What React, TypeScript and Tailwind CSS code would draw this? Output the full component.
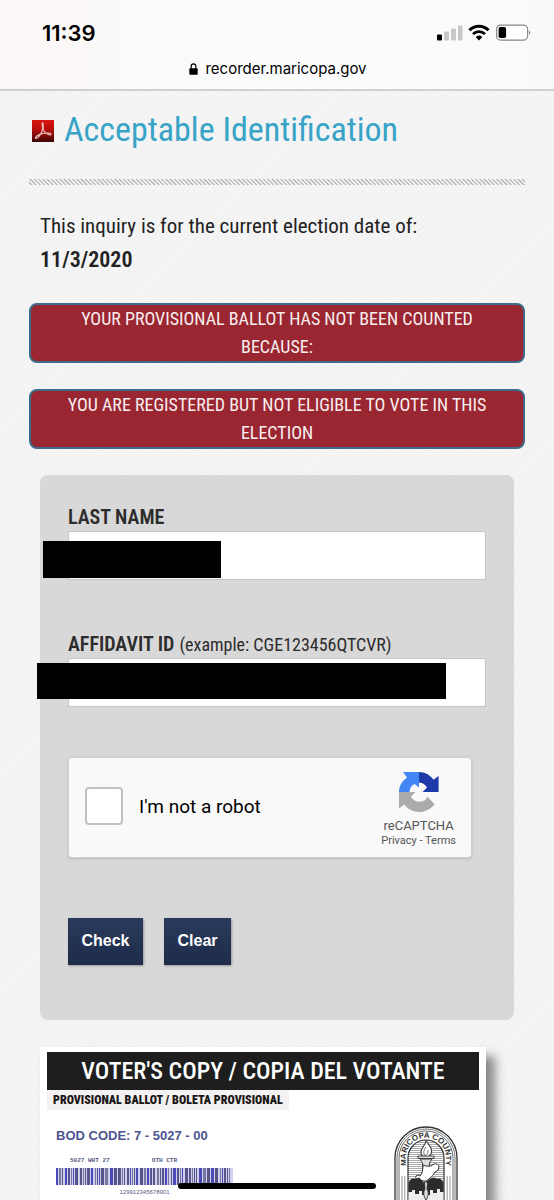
import React from "react";

const condensed = "font-['Roboto_Condensed','Liberation_Sans_Narrow',Roboto,sans-serif]";

const barWidths = [2, 1, 1, 3, 1, 2, 1, 1, 2, 3, 1, 1, 3, 2, 1, 2, 1, 3, 2, 1, 1, 2, 3, 1];

function StatusIcons() {
  return (
    <svg viewBox="0 0 96 18" className="h-[18px] w-24" aria-hidden="true">
      <rect x="2" y="10.5" width="5" height="6" rx="1" fill="#000" />
      <rect x="9" y="7.5" width="5" height="9" rx="1" fill="#c8c8c8" />
      <rect x="16" y="4.5" width="5" height="12" rx="1" fill="#c8c8c8" />
      <rect x="23" y="1.5" width="4.5" height="15" rx="1" fill="#c8c8c8" />
      <path d="M34.5 6.3 C39.5 0.8 48.5 0.8 53.5 6.3" fill="none" stroke="#000" strokeWidth="3" />
      <path d="M38 10.1 C41.2 6.7 46.8 6.7 50 10.1" fill="none" stroke="#000" strokeWidth="2.8" />
      <path d="M40.7 13 Q44 10.2 47.3 13 L44 16.5 Z" fill="#000" />
      <rect x="61.6" y="1.1" width="31" height="15" rx="4" fill="#fff" stroke="#888" strokeWidth="1.2" />
      <rect x="63.6" y="3.1" width="7.5" height="11" rx="1.8" fill="#000" />
      <path d="M94 6.5 Q96.3 8.5 94 10.9 Z" fill="#777" />
    </svg>
  );
}

function Lock() {
  return (
    <svg viewBox="0 0 9 12" className="h-3 w-[9px]" aria-hidden="true">
      <path d="M2.2 6 V3.3 a2.3 2.5 0 0 1 4.6 0 V6" fill="none" stroke="#000" strokeWidth="1.2" />
      <rect x="0.3" y="5.2" width="8.4" height="6.6" rx="1" fill="#000" />
    </svg>
  );
}

function PdfIcon() {
  return (
    <svg viewBox="0 0 22 22" className="size-[22px] shrink-0" aria-hidden="true">
      <defs>
        <linearGradient id="pdf" x1="0" y1="0" x2="0" y2="1">
          <stop offset="0" stopColor="#d9150f" />
          <stop offset="0.45" stopColor="#b50d0b" />
          <stop offset="1" stopColor="#3d0504" />
        </linearGradient>
      </defs>
      <rect width="22" height="22" fill="url(#pdf)" />
      <path
        d="M10.3 2.8 C9.3 4.2 11.5 7 10.2 10.8 C9 14.4 5.6 18.6 3.8 18.4 C2.5 17.6 5.2 15 9.5 13.8 C14 12.6 19.2 12.7 18.9 14.4 C18.3 15.8 14 13.7 12 11 C10.2 8.5 12 4 10.9 2.8 Z"
        fill="none"
        stroke="#e9bdb8"
        strokeWidth="1.2"
        strokeLinejoin="round"
      />
    </svg>
  );
}

function RecaptchaLogo() {
  return (
    <svg viewBox="0 0 40 40" className="size-10" aria-hidden="true">
      <path d="M20 0 C26 0 31 2.8 34.5 7.8 L39.6 4 V20 H23.5 L28 15.6 C26.2 12.4 24 10.8 20 10.5 Z" fill="#1c3aa9" />
      <path d="M20 0 V15.5 L15.6 12 C12.6 13.6 10.8 16 10.5 20 H0 C0 14 3 9 8 5.5 L4 0 Z" fill="#4285f4" />
      <path d="M0 20 H16.5 L12 24.5 C13.8 28 17 29.8 20.5 29.8 C24.5 29.8 27.3 28 28.2 24.6 L35.6 32.2 C32 37 26 40 20 40 C14 40 9 37.4 5.4 32.6 L0 36.6 Z" fill="#ababab" />
    </svg>
  );
}

function Barcode() {
  const bars: React.ReactNode[] = [];
  let x = 0;
  for (let i = 0; x < 174; i++) {
    const w = barWidths[(i * 5 + (i >> 2)) % barWidths.length];
    bars.push(<rect key={i} x={x} y="0" width={w} height="17" fill={i % 4 === 1 ? "#77769f" : i % 3 === 0 ? "#4a49b8" : "#55558a"} />);
    x += w + (i % 5 === 2 ? 2 : 1);
  }
  return (
    <svg viewBox="0 0 177 17" className="h-[17px] w-[177px]" role="img" aria-label="Barcode">
      <rect width="177" height="17" fill="#d0d0ee" />
      {bars}
    </svg>
  );
}

function Seal() {
  return (
    <svg viewBox="0 0 64 76" className="h-[76px] w-16" role="img" aria-label="Maricopa County seal">
      <defs>
        <path id="arch" d="M11.8 47 V32 A20.2 20.2 0 0 1 52.2 32 V47" />
        <pattern id="lines" width="4" height="2" patternUnits="userSpaceOnUse">
          <rect width="4" height="1" fill="#aaa" />
        </pattern>
      </defs>
      <path d="M1 76 V32 A31 31 0 0 1 63 32 V76" fill="#fff" stroke="#333" strokeWidth="1.3" />
      <path d="M3 76 V32 A29 29 0 0 1 61 32 V76" fill="none" stroke="#777" strokeWidth="1" />
      <path d="M5 76 V32 A27 27 0 0 1 59 32 V76" fill="none" stroke="#444" strokeWidth="0.8" />
      <path d="M14 76 V32 A18 18 0 0 1 50 32 V76" fill="url(#lines)" stroke="#333" strokeWidth="1.2" />
      <text fill="#333" className="font-['Liberation_Sans',sans-serif] text-[8px] font-bold">
        <textPath href="#arch" startOffset="50%" textAnchor="middle">MARICOPA COUNTY</textPath>
      </text>
      <path d="M8 50 V76 M10.8 50 V76 M53.2 50 V76 M56 50 V76" stroke="#888" strokeWidth="0.9" />
      <path d="M14.5 57 Q17 51 21 53 Q25 50 30 57 L36 53 Q40 50 43 53 Q47 51 49.5 57 V66 H46 V63 H43 V67 H39 V64 H36 V69 H28 V65 H25 V68 H21 V64 H18 V66 H14.5 Z" fill="#2c2c2c" />
      <path d="M14.6 66 H18 V64 H21 V68 H25 V65 H28 V69 H36 V64 H39 V67 H43 V63 H46 V66 H49.4 V76 H14.6 Z" fill="#eee" />
      <path d="M32 15 C36 20 39 23 37 28 Q35 31 32 31 Q27 31 27 26 C27 22 31 20 32 15 Z" fill="#fff" stroke="#333" strokeWidth="1.1" />
      <path d="M32 21 Q28 26 31 30 Q35 28 34 24" fill="none" stroke="#555" strokeWidth="0.8" />
      <path d="M24 30 H40 V32.5 H24 Z M26 33 H38 L35.5 37 V46 H28.5 V37 Z" fill="#ddd" stroke="#333" strokeWidth="0.9" />
      <path d="M29 39 Q36 42 40 38 Q44 37 45 41 Q45 45 41 46 Q39 50 35 53 Q30 58 25 52 Q21 54 22 50 Q24 48 26 50 Q29 47 29 39 Z" fill="#fff" stroke="#333" strokeWidth="1" />
      <path d="M30.5 56 H33.5 L33 63 Q36 68 32 74 Q28 68 31 63 Z" fill="#ddd" stroke="#333" strokeWidth="0.9" />
    </svg>
  );
}

function Alert({ children }: { children: React.ReactNode }) {
  return (
    <div role="alert" className="rounded-lg border-2 border-[#3d6b88] bg-[#9a2631] px-6 text-center text-[18px] leading-7 text-[#f8eeee]">
      {children}
    </div>
  );
}

function Field({ id, label, hint, mask }: { id: string; label: string; hint?: string; mask: string }) {
  return (
    <div>
      <label htmlFor={id} className="flex h-7 items-baseline gap-[5px] text-[18px] leading-7 text-[#2c2c2c]">
        <span className="text-[20px] font-semibold">{label}</span>
        {hint && <span>{hint}</span>}
      </label>
      <div className="relative">
        <input id={id} type="text" className="block h-[49px] w-full border border-[#c6c6c6] bg-white px-3 shadow-[inset_0_0_1px_#ccc]" />
        <span aria-hidden="true" className={"absolute bg-black " + mask} />
      </div>
    </div>
  );
}

export default function App() {
  return (
    <div className={"flex h-screen flex-col overflow-hidden bg-[#f3f3f3] bg-[repeating-linear-gradient(135deg,#f5f5f5_0px,#f5f5f5_2px,#f1f1f1_3px,#f1f1f1_4px)] " + condensed}>
      <header className="shrink-0 border-b-2 border-[#d0d0d0] bg-linear-to-r from-[#fcf7f7] via-[#fbfcfd] to-[#fafafa] pt-[19px] font-[Inter,sans-serif] text-black">
        <div className="flex h-7 items-center justify-between pr-[23px] pl-[42px]">
          <time className="text-[22px] leading-7 font-semibold">11:39</time>
          <StatusIcons />
        </div>
        <div className="flex h-[42px] items-center justify-center gap-[7px] pt-[2px] pl-[2px] text-[15px]">
          <Lock />
          <span>recorder.maricopa.gov</span>
        </div>
      </header>

      <main className="px-[29px] pt-4">
        <h1 className="flex h-12 items-center gap-[10px] pl-[3px] text-[34px] text-[#37a4c7]">
          <PdfIcon />
          <a href="#identification" className="pb-1">Acceptable Identification</a>
        </h1>
        <hr className="mt-6 h-[6px] border-0 bg-[repeating-linear-gradient(45deg,#f3f3f3_0px,#f3f3f3_1px,#a5a5a5_2px,#f3f3f3_3px)]" />
        <p className="mt-[25px] px-[11px] text-[21px] leading-[33px] text-[#222]">
          This inquiry is for the current election date of:
          <strong className="block text-[22px] font-semibold">11/3/2020</strong>
        </p>
        <div className="mt-[27px] flex flex-col gap-[26px]">
          <Alert>YOUR PROVISIONAL BALLOT HAS NOT BEEN COUNTED BECAUSE:</Alert>
          <Alert>YOU ARE REGISTERED BUT NOT ELIGIBLE TO VOTE IN THIS ELECTION</Alert>
        </div>

        <form className="mx-[11px] mt-[26px] rounded-lg bg-[#d8d8d8] px-7 pt-7 pb-[55px]" onSubmit={(e) => e.preventDefault()}>
          <div className="flex flex-col gap-[50px]">
            <Field id="last-name" label="LAST NAME" mask="top-[10px] -left-[25px] h-[37px] w-[178px]" />
            <Field id="affidavit" label="AFFIDAVIT ID" hint="(example: CGE123456QTCVR)" mask="top-[5px] -left-[31px] h-9 w-[409px]" />
          </div>
          <div className="mt-[50px] flex h-[101px] max-w-[404px] items-center justify-between rounded-sm border border-[#cfcfcf] bg-[#f9f9f9] pr-[15px] pl-4 font-[Roboto,sans-serif] shadow-[0_1px_3px_#bbb]">
            <div className="flex items-center gap-4 pb-1">
              <input id="robot" type="checkbox" className="size-[38px] appearance-none rounded-sm border-2 border-[#c1c1c1] bg-white" />
              <label htmlFor="robot" className="pt-1 text-[19px] text-black">I'm not a robot</label>
            </div>
            <div className="flex flex-col items-center pt-1 text-[#555]">
              <RecaptchaLogo />
              <span className="mt-[6px] text-[13px] leading-4">reCAPTCHA</span>
              <span className="text-[11px] leading-[13px]">
                <a href="#privacy">Privacy</a> - <a href="#terms">Terms</a>
              </span>
            </div>
          </div>
          <div className="mt-[60px] flex gap-[21px] font-['Liberation_Sans',sans-serif] text-[16px] font-bold text-white text-shadow-[0_1px_1px_#000]">
            <button type="submit" className="h-[47px] w-[75px] bg-linear-to-b from-[#293a5c] to-[#1e2c48] pb-[2px] shadow-[1px_1px_2px_#999]">Check</button>
            <button type="reset" className="h-[47px] w-[67px] bg-linear-to-b from-[#293a5c] to-[#1e2c48] pb-[2px] shadow-[1px_1px_2px_#999]">Clear</button>
          </div>
        </form>

        <section className="mx-[11px] mt-[27px] max-w-[446px] bg-white px-[7px] pt-[5px] pb-8 shadow-[9px_9px_10px_#888]">
          <h2 className="h-[38px] bg-[#1e1e1e] text-center text-[24px] leading-[38px] font-medium whitespace-nowrap text-white">VOTER'S COPY / COPIA DEL VOTANTE</h2>
          <div className="flex justify-between">
            <div className="flex flex-col items-start">
              <h3 className="bg-[#f3f1f1] px-[6px] text-[12px] leading-[20px] font-black whitespace-nowrap text-[#1b1717]">PROVISIONAL BALLOT / BOLETA PROVISIONAL</h3>
              <p className="mt-4 ml-[9px] font-['Liberation_Sans',sans-serif] text-[13px] leading-5 font-bold text-[#4d5590]">BOD CODE: 7 - 5027 - 00</p>
              <div className="mt-2 ml-[9px] flex flex-col items-center font-['Liberation_Mono',monospace] text-[#555a80]">
                <div className="flex w-full justify-between pr-14 pl-[14px] text-[6px] leading-[14px] font-bold">
                  <span>5027 WHT 27</span>
                  <span>OTH CTR</span>
                </div>
                <Barcode />
                <span className="font-['Liberation_Sans',sans-serif] text-[6px] leading-[14px]">129912345678901</span>
              </div>
            </div>
            <div className="mt-9 mr-[21px]">
              <Seal />
            </div>
          </div>
        </section>
      </main>
      <div aria-hidden="true" className="fixed bottom-[11px] left-1/2 h-[6px] w-[198px] -translate-x-1/2 rounded-full bg-black" />
    </div>
  );
}
